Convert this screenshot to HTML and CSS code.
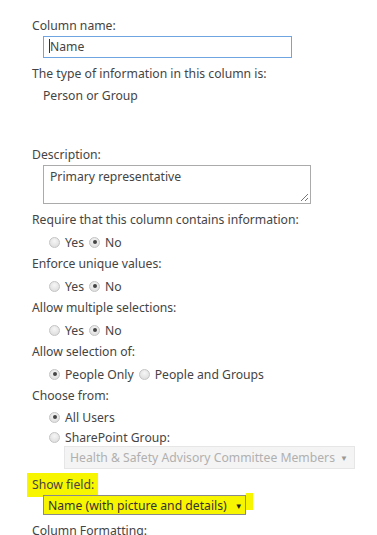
FILE: index.html
```html
<!DOCTYPE html>
<html lang="en">
<head>
    <meta charset="UTF-8">
    <title>Column settings</title>
    <link rel="stylesheet" href="styles.css">
</head>
<body>
    <div class="form">
        <div class="label first">Column name:</div>
        <div class="indent">
            <div class="text-input"><span class="caret"></span>Name</div>
        </div>

        <div class="label type-label">The type of information in this column is:</div>
        <div class="indent line">Person or Group</div>

        <div class="label desc-label">Description:</div>
        <div class="indent">
            <div class="textarea">
                Primary representative
                <svg class="grip" width="10" height="10" viewBox="0 0 10 10">
                    <path d="M9 2 L2 9 M9 6 L6 9" stroke="#777" stroke-width="1" fill="none"/>
                </svg>
            </div>
        </div>

        <div class="label gap-label">Require that this column contains information:</div>
        <div class="indent radios">
            <span class="radio"></span><span class="opt">Yes</span>
            <span class="radio checked"></span><span class="opt">No</span>
        </div>

        <div class="label">Enforce unique values:</div>
        <div class="indent radios">
            <span class="radio"></span><span class="opt">Yes</span>
            <span class="radio checked"></span><span class="opt">No</span>
        </div>

        <div class="label">Allow multiple selections:</div>
        <div class="indent radios">
            <span class="radio"></span><span class="opt">Yes</span>
            <span class="radio checked"></span><span class="opt">No</span>
        </div>

        <div class="label">Allow selection of:</div>
        <div class="indent radios">
            <span class="radio checked"></span><span class="opt">People Only</span>
            <span class="radio"></span><span class="opt">People and Groups</span>
        </div>

        <div class="label">Choose from:</div>
        <div class="indent radios tight">
            <span class="radio checked"></span><span class="opt">All Users</span>
        </div>
        <div class="indent radios tight">
            <span class="radio"></span><span class="opt">SharePoint Group:</span>
        </div>
        <div class="group-select">
            <span>Health &amp; Safety Advisory Committee Members</span>
            <span class="arrow">&#9660;</span>
        </div>

        <div class="label show-label"><span class="marker">Show field:</span></div>
        <div class="indent">
            <div class="select">
                <span>Name (with picture and details)</span>
                <span class="arrow">&#9660;</span>
            </div>
        </div>

        <div class="label">Column Formatting:</div>
    </div>
</body>
</html>
```

FILE: styles.css
```css
body {
    margin: 0;
    background: #fff;
    font-family: "Noto Sans", "Open Sans", sans-serif;
    font-size: 12.2px;
    color: #444;
    white-space: nowrap;
}
.form {
    padding: 15px 0 0 32px;
}
.label {
    line-height: 22px;
    height: 22px;
}
.first {
    height: 21px;
}
.indent {
    padding-left: 11px;
}
.line {
    line-height: 22px;
}
.text-input {
    position: relative;
    height: 20px;
    line-height: 20px;
    border: 1px solid #6fa6e2;
    padding-left: 5px;
    width: 242px;
}
.caret {
    display: inline-block;
    width: 1px;
    height: 14px;
    background: #333;
    vertical-align: -2px;
}
.type-label {
    margin-top: 5px;
}
.desc-label {
    margin-top: 37px;
    height: 21px;
}
.textarea {
    position: relative;
    width: 260px;
    height: 37px;
    border: 1px solid #ababab;
    padding: 0 0 0 6px;
    line-height: 22px;
}
.grip {
    position: absolute;
    right: 1px;
    bottom: 1px;
}
.gap-label {
    margin-top: 5px;
}
.radios {
    display: flex;
    align-items: center;
    height: 22px;
    padding-left: 17px;
}
.radios.tight {
    height: 20px;
}
.radio {
    width: 11px;
    height: 11px;
    border-radius: 50%;
    border: 1px solid #c4c4c4;
    background: radial-gradient(circle at 50% 35%, #f6f6f6, #d9d9d9);
    box-sizing: border-box;
    position: relative;
    flex: none;
}
.radio.checked::after {
    content: "";
    position: absolute;
    left: 2.5px;
    top: 2.5px;
    width: 4px;
    height: 4px;
    border-radius: 50%;
    background: #444;
}
.opt {
    margin: 0 5px 0 5px;
}
.group-select {
    display: flex;
    justify-content: space-between;
    align-items: center;
    margin: -1px 0 0 32px;
    width: 291px;
    height: 23px;
    box-sizing: border-box;
    background: #f4f4f4;
    border: 1px solid #e6e6e6;
    padding: 0 6px 0 5px;
    color: #b0b0b0;
}
.arrow {
    font-size: 8px;
    color: #999;
}
.show-label {
    margin-top: 4px;
}
.marker {
    display: inline-block;
    background: #f8f500;
    margin-left: -5px;
    padding: 1px 4px 1px 5px;
    line-height: 22px;
}
.select {
    position: relative;
    display: flex;
    align-items: center;
    gap: 8px;
    width: 203px;
    height: 20px;
    box-sizing: border-box;
    border: 1px solid #8a8a8a;
    background: #f8f500;
    padding-left: 4px;
    color: #333;
    margin-bottom: 5px;
}
.select::after {
    content: "";
    position: absolute;
    right: -8px;
    top: -3px;
    width: 7px;
    height: 17px;
    background: #f8f500;
}
.select .arrow {
    color: #222;
}
```
